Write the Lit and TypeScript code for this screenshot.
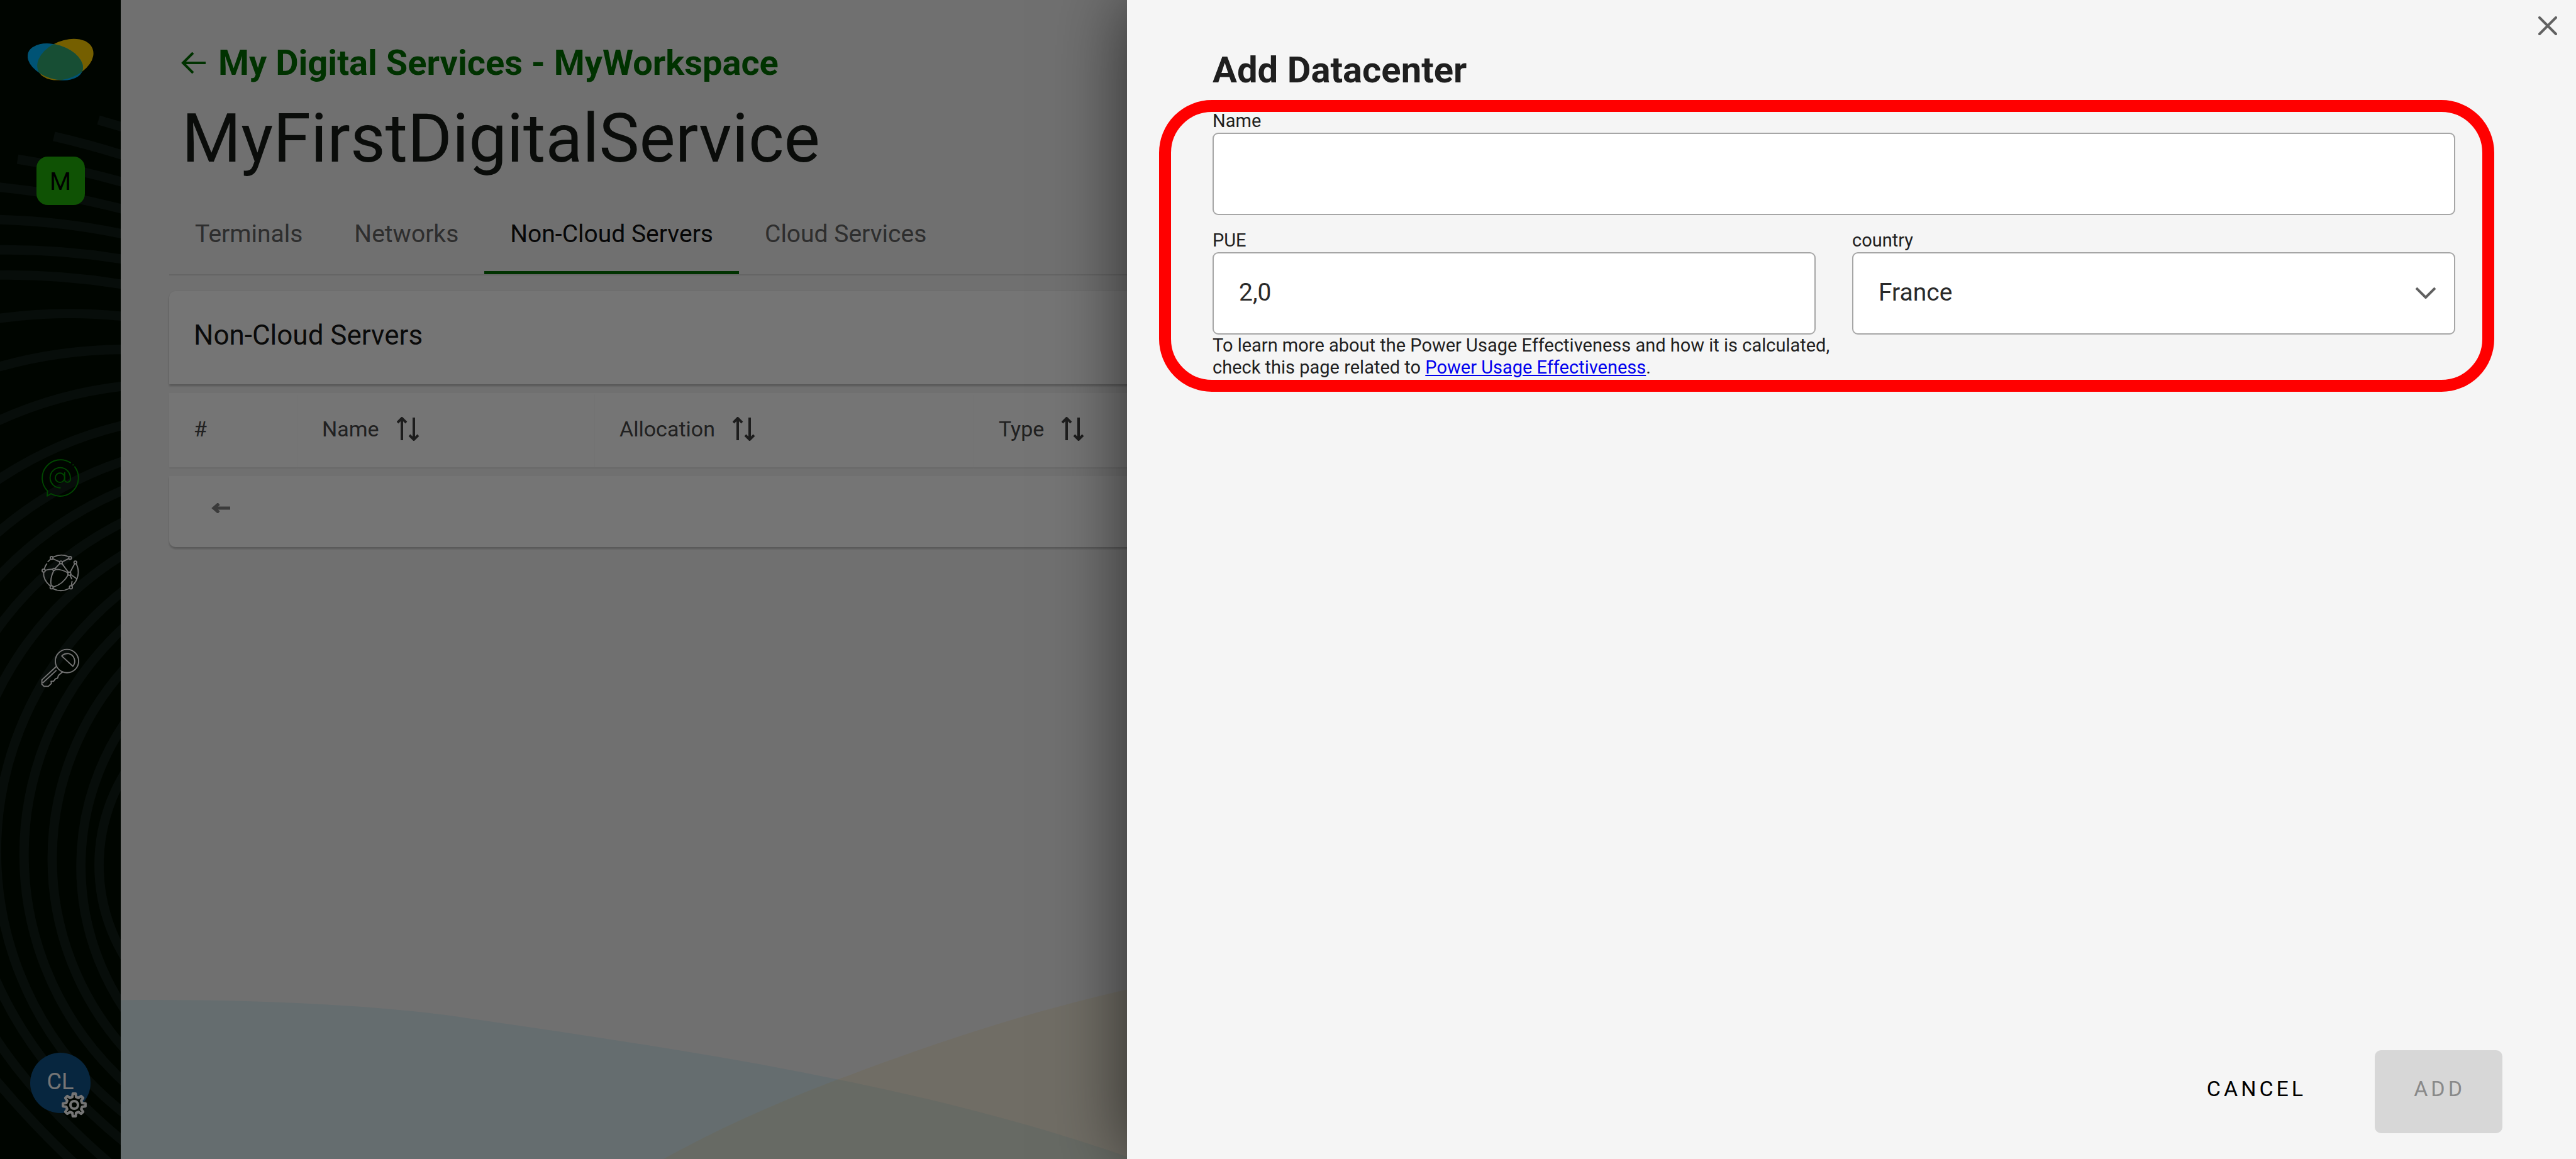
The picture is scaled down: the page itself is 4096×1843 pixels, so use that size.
import { LitElement, html, css, svg } from "lit";
import { customElement, state } from "lit/decorators.js";

/** Outline of a toothed wheel centred on the origin. */
function gearPath(teeth: number, inner: number, outer: number): string {
  const step = (Math.PI * 2) / teeth;
  const at = (radius: number, angle: number) =>
    `${(radius * Math.cos(angle)).toFixed(1)} ${(radius * Math.sin(angle)).toFixed(1)}`;
  let d = "";
  for (let i = 0; i < teeth; i++) {
    const a = i * step;
    d += `${i ? "L" : "M"}${at(inner, a - step * 0.3)}L${at(outer, a - step * 0.16)}`;
    d += `L${at(outer, a + step * 0.16)}L${at(inner, a + step * 0.3)}`;
  }
  return d + "Z";
}

const RINGS = [
  { cx: 472, cy: 1478, r: 303 },
  { cx: 575, cy: 1480, r: 437 },
  { cx: 577, cy: 1467, r: 488 },
  { cx: 568, cy: 1460, r: 527 },
  { cx: 561, cy: 1455, r: 567 },
];

const ARCS = [
  "M-10 1195A575 575 0 0 1 216 944",
  "M-10 1082A593 593 0 0 1 216 889",
  "M-10 993A622 622 0 0 1 216 835",
  "M-10 915A640 640 0 0 1 216 786",
  "M-10 824A660 660 0 0 1 216 725",
  "M-10 722A700 700 0 0 1 216 659",
  "M-10 629A780 780 0 0 1 216 597",
  "M-10 545A900 900 0 0 1 216 541",
  "M-10 470A1200 1200 0 0 1 216 487",
  "M-10 427A1200 1200 0 0 1 216 444",
  "M-10 375A1200 1200 0 0 1 216 401",
  "M-10 319A1400 1400 0 0 1 216 359",
  "M30 272A1600 1600 0 0 1 216 313",
  "M92 233A1600 1600 0 0 1 216 267",
  "M168 205L216 219",
  "M-10 1668Q60 1830 216 1954",
  "M-10 1770Q60 1878 190 1990",
  "M-10 1842Q60 1925 130 1990",
];

const sortIcon = svg`
  <svg class="sort" viewBox="0 0 36 38" aria-hidden="true">
    <path d="M8 37V2M1 9L8 2L15 9M27 1V36M20 29L27 36L34 29" />
  </svg>`;

@customElement("side-nav")
export class SideNav extends LitElement {
  static styles = css`
    :host {
      position: relative;
      display: flex;
      flex-direction: column;
      align-items: center;
      padding: 60px 0 73px;
      background: #000c00;
      color: #ffffff;
      overflow: hidden;
      font-family: "Roboto", "Noto Sans", sans-serif;
    }
    .pattern {
      position: absolute;
      inset: 0;
      width: 100%;
      height: 100%;
      fill: none;
      stroke: #111d16;
      stroke-width: 16;
    }
    .logo {
      position: relative;
      width: 105px;
      height: 70px;
    }
    .workspace {
      position: relative;
      width: 77px;
      height: 77px;
      margin-top: 119px;
      padding: 4px 0 0;
      border: 0;
      border-radius: 18px;
      background: #21b209;
      color: #000000;
      font: 400 39px/73px "Roboto", "Noto Sans", sans-serif;
    }
    .links {
      position: relative;
      display: flex;
      flex-direction: column;
      gap: 91px;
      margin-top: 404px;
    }
    .link {
      display: block;
      height: 60px;
      color: #ffffff;
    }
    .link.active {
      color: #009c00;
    }
    .glyph {
      display: block;
      width: 60px;
      height: 60px;
      fill: none;
      stroke: currentColor;
      stroke-width: 6;
      stroke-linejoin: round;
      stroke-linecap: round;
      overflow: visible;
    }
    .account {
      position: relative;
      width: 96px;
      height: 96px;
      margin-top: auto;
      padding: 0 0 4px;
      border: 0;
      border-radius: 50%;
      background: #115389;
      color: #ffffff;
      font: 400 36px/92px "Roboto", "Noto Sans", sans-serif;
    }
    .gear {
      position: absolute;
      right: 5px;
      bottom: -8px;
      width: 42px;
      height: 42px;
      fill: #000c00;
      stroke: #ffffff;
      stroke-width: 4;
      stroke-linejoin: round;
    }
  `;

  render() {
    return html`
      <svg class="pattern" viewBox="0 0 206 1980" preserveAspectRatio="none" aria-hidden="true">
        ${RINGS.map((c) => svg`<circle cx=${c.cx} cy=${c.cy} r=${c.r} />`)}
        ${ARCS.map((d) => svg`<path d=${d} />`)}
      </svg>
      <svg class="logo" viewBox="136 190 342 226" role="img" aria-label="Home">
        <clipPath id="lens"><ellipse cx="331" cy="302" rx="152" ry="98" transform="rotate(-22 331 302)" /></clipPath>
        <ellipse cx="331" cy="302" rx="152" ry="98" transform="rotate(-22 331 302)" fill="#ffcf00" />
        <ellipse cx="279" cy="314" rx="148" ry="88" transform="rotate(18 279 314)" fill="#00b6ff" />
        <g clip-path="url(#lens)">
          <ellipse cx="279" cy="314" rx="148" ry="88" transform="rotate(18 279 314)" fill="#34aa71" />
        </g>
      </svg>
      <button class="workspace" type="button">M</button>
      <nav class="links">
        <a class="link active" href="#services" aria-label="Digital services">
          <svg class="glyph" viewBox="213 72 194 194">
            <path d="M384 112A94 94 0 0 1 262 250L242 262L244 236A94 94 0 0 1 362 91M375 102h1" />
            <circle cx="308" cy="168" r="24" />
            <path d="M332 142V180A14 14 0 0 0 361 172A52 52 0 1 0 309 220" />
          </svg>
        </a>
        <a class="link" href="#systems" aria-label="Information systems">
          <svg class="glyph" viewBox="213 561 194 194">
            <path d="M275 576Q313 558 350 574M392 612A93 93 0 0 1 370 724M356 738Q313 760 272 739M258 726Q220 692 224 655M228 636Q232 620 240 612M246 600L258 589" />
            <path d="M273 586L306 601M352 585L320 601M307 610L284 634M233 645Q252 638 270 639M284 640Q320 640 349 658M318 610L351 655M383 612L360 655M275 648Q255 690 263 724M350 668Q325 715 273 731M363 666L394 688M360 670L368 688M370 702L366 724" />
            <circle cx="265" cy="581" r="7" /><circle cx="360" cy="581" r="7" />
            <circle cx="387" cy="604" r="7" /><circle cx="313" cy="604" r="7" />
            <circle cx="224" cy="646" r="8" /><circle cx="277" cy="640" r="6" />
            <circle cx="356" cy="662" r="8" /><circle cx="265" cy="732" r="8" />
            <circle cx="364" cy="732" r="8" />
          </svg>
        </a>
        <a class="link" href="#access" aria-label="Access rights">
          <svg class="glyph" viewBox="213 1049 194 194">
            <circle cx="344" cy="1111" r="60" />
            <path d="M317 1085Q332 1070 353 1073A40 40 0 0 1 374 1138Z" />
            <path d="M290 1138L215 1208V1230L226 1241H248L264 1226L262 1215L275 1215L284 1203L296 1198L300 1185L322 1166M221 1222L288 1160" />
          </svg>
        </a>
      </nav>
      <button class="account" type="button">
        CL
        <svg class="gear" viewBox="-21 -21 42 42" aria-hidden="true">
          <path d=${gearPath(8, 13, 18)} />
          <circle r="6" />
        </svg>
      </button>
    `;
  }
}

@customElement("service-page")
export class ServicePage extends LitElement {
  static styles = css`
    :host {
      position: relative;
      display: block;
      padding: 64px 77px 0;
      background: #f4f4f4;
      color: #161c16;
      font-family: "Roboto", "Noto Sans", sans-serif;
      overflow: hidden;
    }
    .waves {
      position: absolute;
      left: 0;
      bottom: 0;
      width: 1776px;
      height: 316px;
    }
    .crumb {
      display: flex;
      align-items: center;
      gap: 20px;
      margin-left: 19px;
      color: #006d00;
      font-size: 56px;
      font-weight: 700;
      line-height: 72px;
      text-decoration: none;
    }
    .back {
      width: 39px;
      height: 34px;
      fill: none;
      stroke: currentColor;
      stroke-width: 4;
    }
    .title {
      margin: 24px 0 31px 20px;
      font-size: 108px;
      font-weight: 400;
      line-height: 120px;
    }
    .tabs {
      display: flex;
      border-bottom: 2px solid #dcdcdc;
    }
    .tab {
      padding: 39px 41px 37px;
      border: 0;
      border-bottom: 5px solid transparent;
      background: none;
      color: #646464;
      font: 400 39px/44px "Roboto", "Noto Sans", sans-serif;
    }
    .tab.active {
      border-color: #006d00;
      color: #101010;
    }
    .card {
      margin-top: 25px;
    }
    .heading {
      position: relative;
      margin: 0;
      padding: 46px 39px 54px;
      border-radius: 10px 10px 0 0;
      background: #ffffff;
      box-shadow: 0 3px 3px rgba(0, 0, 0, 0.2), 0 0 4px rgba(0, 0, 0, 0.06);
      color: #161616;
      font-size: 44px;
      font-weight: 400;
      line-height: 48px;
    }
    .servers {
      width: 100%;
      border-collapse: separate;
      border-spacing: 0 14px;
      table-layout: fixed;
      text-align: left;
    }
    .index {
      width: 204px;
    }
    .name {
      width: 473px;
    }
    .allocation {
      width: 603px;
    }
    .th {
      box-sizing: border-box;
      height: 118px;
      padding: 0 0 4px 39px;
      background: #ffffff;
      box-shadow: 0 2px 2px rgba(0, 0, 0, 0.06);
      color: #484848;
      font-size: 34px;
      font-weight: 400;
    }
    .label {
      display: flex;
      align-items: center;
      gap: 28px;
    }
    .sort {
      width: 36px;
      height: 38px;
      fill: none;
      stroke: #404040;
      stroke-width: 4;
    }
    .td {
      box-sizing: border-box;
      height: 113px;
      padding: 0 0 12px 67px;
      border-radius: 0 0 10px 10px;
      background: #ffffff;
      box-shadow: 0 3px 3px rgba(0, 0, 0, 0.2);
      color: #808080;
    }
    .empty {
      display: block;
      width: 30px;
      height: 16px;
      fill: none;
      stroke: currentColor;
      stroke-width: 5;
    }
  `;

  @state() private active = "Non-Cloud Servers";

  render() {
    const tabs = ["Terminals", "Networks", "Non-Cloud Servers", "Cloud Services"];
    return html`
      <svg class="waves" viewBox="206 1640 1908 340" preserveAspectRatio="none" aria-hidden="true">
        <path fill="#00b6dd" fill-opacity=".095" d="M206 1708C420 1706 650 1716 798 1739C1010 1770 1225 1801 1431 1844C1610 1880 1780 1925 1925 1976L1935 1980H206Z" />
        <path fill="#f4c040" fill-opacity=".13" d="M1133 1980C1225 1929 1320 1886 1431 1844C1580 1787 1745 1731 1925 1690L2114 1650V1980Z" />
      </svg>
      <a class="crumb" href="#services">
        <svg class="back" viewBox="0 0 39 34" aria-hidden="true"><path d="M39 17H3M19 1L3 17L19 33" /></svg>
        <span>My Digital Services - MyWorkspace</span>
      </a>
      <h1 class="title">MyFirstDigitalService</h1>
      <div class="tabs" role="tablist">
        ${tabs.map(
          (tab) => html`<button
            class=${tab === this.active ? "tab active" : "tab"}
            type="button"
            role="tab"
            aria-selected=${tab === this.active}
            @click=${() => (this.active = tab)}
          >${tab}</button>`
        )}
      </div>
      <section class="card">
        <h2 class="heading">Non-Cloud Servers</h2>
        <table class="servers">
          <thead>
            <tr>
              <th class="th index" scope="col">#</th>
              <th class="th name" scope="col"><span class="label">Name ${sortIcon}</span></th>
              <th class="th allocation" scope="col"><span class="label">Allocation ${sortIcon}</span></th>
              <th class="th" scope="col"><span class="label">Type ${sortIcon}</span></th>
            </tr>
          </thead>
          <tbody>
            <tr>
              <td class="td" colspan="4">
                <svg class="empty" viewBox="0 0 30 16" aria-hidden="true"><path d="M30 8H4M12 1L4 8L12 15" /></svg>
              </td>
            </tr>
          </tbody>
        </table>
      </section>
    `;
  }
}

@customElement("datacenter-panel")
export class DatacenterPanel extends LitElement {
  static styles = css`
    :host {
      display: flex;
      flex-direction: column;
      background: #f5f5f5;
      color: #1f1f1f;
      box-shadow: 0 0 110px rgba(0, 0, 0, 0.6);
      font-family: "Roboto", "Noto Sans", sans-serif;
    }
    .close {
      align-self: flex-end;
      margin: 26px 30px 19px;
      padding: 0;
      border: 0;
      background: none;
    }
    .cross {
      display: block;
      width: 30px;
      height: 30px;
      fill: none;
      stroke: #616161;
      stroke-width: 4;
      stroke-linecap: round;
    }
    .title {
      margin: 0 136px 12px;
      font-size: 58px;
      font-weight: 700;
      line-height: 72px;
    }
    .fields {
      display: grid;
      grid-template-columns: minmax(0, 1fr) minmax(0, 1fr);
      column-gap: 58px;
      row-gap: 26px;
      margin: 0 130px 0 51px;
      padding: 0 43px 2px 66px;
      border: 19px solid #ff0000;
      border-radius: 84px;
    }
    .field {
      display: flex;
      flex-direction: column;
    }
    .wide {
      grid-column: 1 / -1;
    }
    .label {
      margin-bottom: 5px;
      font-size: 29px;
      line-height: 28px;
    }
    .control {
      box-sizing: border-box;
      width: 100%;
      height: 131px;
      padding: 0 40px 4px;
      border: 2px solid #a6a6a6;
      border-radius: 9px;
      background: #ffffff;
      color: #2a2a2a;
      font: 400 39px/44px "Roboto", "Noto Sans", sans-serif;
      appearance: none;
    }
    .picker {
      position: relative;
    }
    .chevron {
      position: absolute;
      right: 30px;
      top: 56px;
      width: 34px;
      height: 18px;
      fill: none;
      stroke: #616161;
      stroke-width: 4;
      pointer-events: none;
    }
    .hint {
      margin: 0;
      font-size: 29px;
      line-height: 35px;
      white-space: nowrap;
    }
    .more {
      color: #0000ee;
    }
    .actions {
      display: flex;
      justify-content: flex-end;
      gap: 50px;
      margin: auto 117px 41px;
    }
    .action {
      height: 132px;
      padding: 0 59px 10px 62px;
      border: 0;
      border-radius: 10px;
      background: none;
      color: #000000;
      font: 400 34px/40px "Roboto", "Noto Sans", sans-serif;
      letter-spacing: 5px;
    }
    .action:disabled {
      background: #d7d7d7;
      color: #898989;
    }
  `;

  render() {
    return html`
      <button class="close" type="button" aria-label="Close">
        <svg class="cross" viewBox="0 0 30 30"><path d="M2 2L28 28M28 2L2 28" /></svg>
      </button>
      <h2 class="title">Add Datacenter</h2>
      <form class="fields">
        <div class="field wide">
          <label class="label" for="name">Name</label>
          <input class="control" id="name" type="text" />
        </div>
        <div class="field">
          <label class="label" for="pue">PUE</label>
          <input class="control" id="pue" type="text" inputmode="decimal" value="2,0" />
          <p class="hint">
            To learn more about the Power Usage Effectiveness and how it is calculated,<br />
            check this page related to <a class="more" href="#pue">Power Usage Effectiveness</a>.
          </p>
        </div>
        <div class="field">
          <label class="label" for="country">country</label>
          <div class="picker">
            <select class="control" id="country"><option>France</option></select>
            <svg class="chevron" viewBox="0 0 34 18" aria-hidden="true"><path d="M2 1L17 16L32 1" /></svg>
          </div>
        </div>
      </form>
      <div class="actions">
        <button class="action" type="button">CANCEL</button>
        <button class="action" type="button" disabled>ADD</button>
      </div>
    `;
  }
}

@customElement("app-root")
export class AppRoot extends LitElement {
  static styles = css`
    :host {
      position: relative;
      display: grid;
      grid-template-columns: 192px 1fr;
      min-height: 100vh;
      overflow: hidden;
    }
    .mask {
      position: absolute;
      inset: 0;
      background: rgba(0, 0, 0, 0.54);
    }
    .panel {
      position: absolute;
      top: 0;
      right: 0;
      bottom: 0;
      width: 56.25%;
    }
  `;

  render() {
    return html`
      <side-nav></side-nav>
      <service-page></service-page>
      <div class="mask"></div>
      <datacenter-panel class="panel"></datacenter-panel>
    `;
  }
}
